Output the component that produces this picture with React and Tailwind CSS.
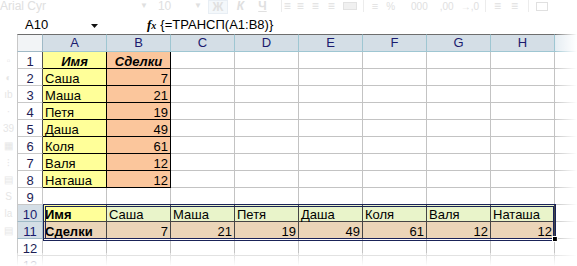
const FONT = { fontFamily: '"Liberation Sans", Arial, sans-serif' };

const COLS = ['A', 'B', 'C', 'D', 'E', 'F', 'G', 'H'];
const TOP = [
  ['Имя', 'Сделки'],
  ['Саша', 7],
  ['Маша', 21],
  ['Петя', 19],
  ['Даша', 49],
  ['Коля', 61],
  ['Валя', 12],
  ['Наташа', 12],
];
const ROW10 = ['Имя', 'Саша', 'Маша', 'Петя', 'Даша', 'Коля', 'Валя', 'Наташа'];
const ROW11 = ['Сделки', 7, 21, 19, 49, 61, 12, 12];

function rowHeaderClass(r) {
  if (r === 10 || r === 11)
    return 'h-[17px] border-l border-r border-b border-l-[#c8c8c8] border-r-[#9fb9c6] border-b-[#9fb9c6] bg-[#d4dee6] text-[#1b1b6e] flex justify-center leading-[19px]';
  if (r <= 8)
    return 'h-[17px] border-l border-r border-b border-l-[#c8c8c8] border-r-[#505050] border-b-[#c8c8c8] bg-white text-[#1d1d55] flex justify-center leading-[19px]';
  return 'h-[17px] border-l border-r border-b border-[#c8c8c8] bg-white text-[#1d1d55] flex justify-center leading-[19px]';
}

function cellProps(r, c) {
  const base = 'h-[17px] border-r border-b px-[2px] whitespace-nowrap leading-[19px] flex ';
  if (r >= 1 && r <= 8 && c <= 1) {
    const v = TOP[r - 1][c];
    const bg = c === 0 ? 'bg-[#ffff99] ' : 'bg-[#fbc69c] ';
    if (r === 1) return { cls: base + bg + 'border-black justify-center font-bold italic', v };
    if (c === 0) return { cls: base + bg + 'border-black justify-start', v };
    return { cls: base + bg + 'border-black justify-end', v };
  }
  if (r === 10) {
    if (c === 0) return { cls: base + 'bg-[#ffff99] border-[#454545] justify-start font-bold', v: ROW10[c] };
    return { cls: base + 'bg-[#e9f4ca] border-[#454545] justify-start', v: ROW10[c] };
  }
  if (r === 11) {
    if (c === 0) return { cls: base + 'bg-[#ebd5b8] border-[#454545] justify-start font-bold', v: ROW11[c] };
    return { cls: base + 'bg-[#ebd5b8] border-[#454545] justify-end', v: ROW11[c] };
  }
  return { cls: base + 'bg-white border-[#c3c3c3]', v: '' };
}

function Ribbon() {
  return (
    <div className="h-[16px] flex items-start text-[12px] leading-[13px] text-[#e0e0e0] overflow-hidden whitespace-nowrap">
      <span className="w-[140px]">Arial Cyr</span>
      <span className="mt-[2px] text-[8px] leading-[8px]">▼</span>
      <span className="ml-[10px] w-[36px]">10</span>
      <span className="mt-[2px] text-[8px] leading-[8px]">▼</span>
      <span className="ml-[6px] w-[20px] h-[14px] border border-[#e8eef4] bg-[#f4f8fb] flex justify-center leading-[12px] font-bold">Ж</span>
      <span className="ml-[9px] italic font-bold">К</span>
      <span className="ml-[14px] underline font-bold">Ч</span>
      <span className="ml-[14px] w-px h-[12px] bg-[#ececec]"></span>
      <span className="ml-[2px]">≡</span>
      <span className="ml-[6px]">≡</span>
      <span className="ml-[8px]">≡</span>
      <span className="ml-[9px]">≡</span>
      <span className="ml-[8px] w-[14px] h-[8px] mt-[2px] border border-[#e2e2e2] bg-[#f0f0f0]"></span>
      <span className="ml-[6px] w-px h-[12px] bg-[#ececec]"></span>
      <span className="ml-[8px] text-[11px]">≡</span>
      <span className="ml-[8px] text-[10px]">%</span>
      <span className="ml-[16px] text-[10px]">000</span>
      <span className="ml-[12px] text-[10px]">,00</span>
      <span className="ml-[7px] text-[10px]">→,0</span>
      <span className="ml-[6px] w-px h-[12px] bg-[#ececec]"></span>
      <span className="ml-[8px]">≡</span>
      <span className="ml-[10px]">≡</span>
      <span className="ml-[10px] w-px h-[12px] bg-[#ececec]"></span>
      <span className="ml-[7px] w-[12px] h-[9px] mt-[2px] border border-[#e0e0e0]"></span>
    </div>
  );
}

function FormulaBar() {
  return (
    <div className="h-[18px] flex items-center text-[13px] text-black whitespace-nowrap">
      <span className="ml-[25px] w-[66px]">A10</span>
      <svg width="7" height="4" viewBox="0 0 7 4" className="mt-[1px]">
        <polygon points="0,0 7,0 3.5,4" fill="#111" />
      </svg>
      <span className="ml-[49px] font-bold italic text-[13px]" style={{ fontFamily: '"Liberation Serif", serif' }}>
        f<span className="text-[10px]">x</span>
      </span>
      <span className="ml-[4px]">{'{=ТРАНСП(A1:B8)}'}</span>
    </div>
  );
}

function LeftGhost() {
  return (
    <div className="w-[17px] flex flex-col items-center text-[10px] text-[#e6e6e6] leading-[17px] pt-[18px]">
      <span>▫</span>
      <span>◐</span>
      <span>ıb</span>
      <span>·</span>
      <span>39</span>
      <span>▦</span>
      <span>⁝</span>
      <span>▤</span>
      <span>S</span>
      <span>la</span>
      <span>▤</span>
    </div>
  );
}

export default function App() {
  const rows = [];
  for (let r = 1; r <= 13; r++) rows.push(r);
  return (
    <div className="w-[577px] h-[266px] relative overflow-hidden bg-white text-[13px] text-black" style={FONT}>
      <Ribbon />
      <FormulaBar />
      <div className="flex">
        <LeftGhost />
        <div className="grid grid-cols-[26px_repeat(8,64px)_22px] auto-rows-min">
          <div className="h-[18px] border-t border-l border-r border-b border-t-[#6e6e6e] border-l-[#c8c8c8] border-r-[#9fb9c6] border-b-[#9fb9c6] bg-[#f2f4f6]"></div>
          {COLS.map((c) => (
            <div
              key={c}
              className="h-[18px] border-t border-r border-b border-t-[#6e6e6e] border-r-[#9ec6d2] border-b-[#9ec6d2] bg-[#d4dee6] text-[#1b1b6e] flex justify-center leading-[16px]"
            >
              {c}
            </div>
          ))}
          <div className="h-[18px] border-t border-b border-t-[#6e6e6e] border-b-[#9ec6d2] bg-[#e4ecf2]"></div>
          {rows.map((r) => (
            <div key={r} className="contents">
              <div className={rowHeaderClass(r)}>{r}</div>
              {COLS.map((c, ci) => {
                const p = cellProps(r, ci);
                return (
                  <div key={c} className={p.cls}>
                    {p.v}
                  </div>
                );
              })}
              <div className="h-[17px] border-b border-[#c3c3c3] bg-white"></div>
            </div>
          ))}
        </div>
      </div>

      {/* selection of the array range */}
      <div className="absolute left-[43px] top-[204px] w-[513px] h-[37px] border-[3px] border-double border-[#1a2358] pointer-events-none"></div>
      <div className="absolute left-[552px] top-[236px] w-[6px] h-[6px] bg-black border border-white"></div>

      {/* faded edges */}
      <div className="absolute left-[556px] top-[30px] w-[21px] h-[236px] bg-gradient-to-r from-white/10 to-white"></div>
      <div className="absolute left-0 top-[253px] w-[577px] h-[13px] bg-gradient-to-b from-white/40 to-white"></div>
    </div>
  );
}
